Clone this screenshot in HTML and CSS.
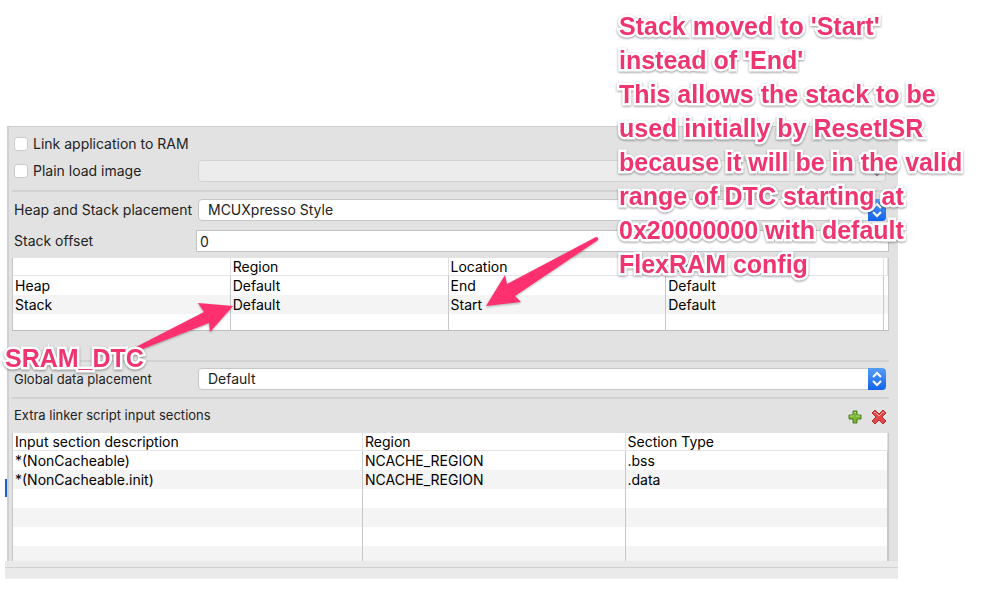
FILE: index.html
```html
<!DOCTYPE html>
<html lang="en">
<head>
    <meta charset="UTF-8">
    <meta name="viewport" content="width=device-width, initial-scale=1.0">
    <title>Managed Linker Script</title>
    <link rel="stylesheet" href="styles.css">
</head>
<body>
    <main class="figure">
        <form class="panel">
            <section class="group first">
                <div class="row check-row">
                    <label class="check"><input type="checkbox"> Link application to RAM</label>
                </div>
                <div class="row">
                    <label class="check"><input type="checkbox"> Plain load image</label>
                    <div class="combo disabled">
                        <select aria-label="Plain load image type" disabled><option></option></select>
                        <span class="combo-btn">
                            <svg width="10" height="16" viewBox="0 0 10 16"><path d="M1 8l4 4 4-4"/></svg>
                        </span>
                    </div>
                </div>
            </section>

            <section class="group placement">
                <div class="row">
                    <label for="style">Heap and Stack placement</label>
                    <div class="combo">
                        <select id="style"><option>MCUXpresso Style</option></select>
                        <span class="combo-btn">
                            <svg width="10" height="16" viewBox="0 0 10 16"><path d="M1 6l4-4 4 4M1 10l4 4 4-4"/></svg>
                        </span>
                    </div>
                </div>
                <div class="row offset-row">
                    <label for="offset">Stack offset</label>
                    <input type="text" class="offset" id="offset" value="0">
                </div>
                <div class="table-box heap-box">
                    <table class="heap-table">
                        <thead>
                            <tr><th></th><th>Region</th><th>Location</th><th>Size</th><th></th></tr>
                        </thead>
                        <tbody>
                            <tr><td>Heap</td><td>Default</td><td>End</td><td>Default</td><td></td></tr>
                            <tr><td>Stack</td><td>Default</td><td>Start</td><td>Default</td><td></td></tr>
                            <tr><td></td><td></td><td></td><td></td><td></td></tr>
                        </tbody>
                    </table>
                </div>
            </section>

            <section class="group global">
                <div class="row small">
                    <label for="global">Global data placement</label>
                    <div class="combo">
                        <select id="global"><option>Default</option></select>
                        <span class="combo-btn">
                            <svg width="10" height="16" viewBox="0 0 10 16"><path d="M1 6l4-4 4 4M1 10l4 4 4-4"/></svg>
                        </span>
                    </div>
                </div>
            </section>

            <section class="group extra">
                <div class="toolbar small">
                    <span>Extra linker script input sections</span>
                    <button type="button" class="tool" aria-label="Add">
                        <svg width="14" height="14" viewBox="0 0 14 14">
                            <path d="M5 1h4v4h4v4H9v4H5V9H1V5h4z" fill="#7db72f" stroke="#4b7a22"/>
                            <path d="M6 2.500h2M2 6h4M8 6h4" stroke="#b9dc7c" fill="none"/>
                        </svg>
                    </button>
                    <button type="button" class="tool" aria-label="Delete">
                        <svg width="16" height="16" viewBox="0 0 16 16">
                            <path d="M4 1L8 5l4-4 3 3-4 4 4 4-3 3-4-4-4 4-3-3 4-4-4-4z" fill="#e2484a" stroke="#b92b31" stroke-linejoin="round"/>
                            <path d="M3 4l1-1 4 4 4-4 1 1" stroke="#f29a98" fill="none"/>
                        </svg>
                    </button>
                </div>
                <div class="table-box sections-box">
                    <table class="sections-table">
                        <thead>
                            <tr><th>Input section description</th><th>Region</th><th>Section Type</th></tr>
                        </thead>
                        <tbody>
                            <tr><td>*(NonCacheable)</td><td>NCACHE_REGION</td><td>.bss</td></tr>
                            <tr><td>*(NonCacheable.init)</td><td>NCACHE_REGION</td><td>.data</td></tr>
                            <tr><td></td><td></td><td></td></tr>
                            <tr><td></td><td></td><td></td></tr>
                            <tr><td></td><td></td><td></td></tr>
                            <tr><td></td><td></td><td></td></tr>
                        </tbody>
                    </table>
                </div>
            </section>
        </form>
        <div class="footer"></div>
        <span class="selection-edge"></span>

        <!-- callouts drawn over the dialog -->
        <svg class="arrows" width="640" height="380" viewBox="0 0 640 380">
            <path d="M132 349L204 312 198 303 233 306 210 332 209 323 140 350z"/>
            <path d="M596 237L507 284 505 275 486 306 521 302 515 296 598 240q1-3-2-3z"/>
        </svg>
        <p class="note note-region">SRAM_DTC</p>
        <p class="note note-stack">
            Stack moved to 'Start'<br>
            instead of 'End'<br>
            This allows the stack to be<br>
            used initially by ResetISR<br>
            because it will be in the valid<br>
            range of DTC starting at<br>
            0x20000000 with default<br>
            FlexRAM config
        </p>
    </main>
</body>
</html>
```

FILE: styles.css
```css
* {
    box-sizing: border-box;
}
body {
    margin: 0;
    background: #fff;
    color: #222;
    font-family: Inter, "Liberation Sans", sans-serif;
    font-size: 14px;
    line-height: 18px;
}
.figure {
    position: relative;
    padding: 126px 101px 0 5px;
}
.panel {
    margin-left: 2px;
    background: #e2e2e2;
    border-left: 2px solid #d0d0d0;
    border-top: 1px solid #cfcfcf;
}
.group {
    margin: 0 9px 0 3px;
    padding-top: 7px;
    border-top: 2px solid #d2d2d2;
}
.group.first {
    border-top: none;
    padding: 6px 0 8px;
}
.row {
    display: grid;
    grid-template-columns: 186px 1fr;
    align-items: center;
    min-height: 22px;
    padding-right: 3px;
}
.row label {
    padding-left: 2px;
    white-space: nowrap;
}
.check-row {
    margin-bottom: 5px;
}
.check {
    display: flex;
    align-items: center;
    gap: 5px;
}
.check input {
    appearance: none;
    width: 14px;
    height: 14px;
    margin: 0;
    background: #fff;
    border: 1px solid #cbcbcb;
    border-radius: 3px;
}
.combo {
    position: relative;
    height: 22px;
}
.combo select {
    appearance: none;
    display: block;
    width: 100%;
    height: 22px;
    padding: 0 28px 0 9px;
    background: #fff;
    border: 1px solid #c6c6c6;
    border-radius: 4px;
    color: #222;
    font: inherit;
    font-size: 14px;
}
.combo.disabled select {
    background: #f1f1f1;
    border-color: #cdcdcd;
}
.combo-btn {
    position: absolute;
    top: 0;
    right: 0;
    display: grid;
    place-items: center;
    width: 18px;
    height: 22px;
    background: linear-gradient(#559df8, #1263ea);
    border-radius: 0 4px 4px 0;
    pointer-events: none;
}
.combo-btn path {
    fill: none;
    stroke: #fff;
    stroke-width: 2;
}
.disabled .combo-btn {
    background: none;
}
.disabled .combo-btn path {
    stroke: #888;
}
.offset-row {
    grid-template-columns: 184px 1fr;
    margin-top: 9px;
    padding-right: 0;
}
.offset {
    width: 100%;
    height: 22px;
    padding: 0 3px;
    background: #fff;
    border: 1px solid #c2c2c2;
    color: #222;
    font: inherit;
}
.table-box {
    background: #fff;
    border-left: 1px solid #c6c6c6;
    border-right: 1px solid #c6c6c6;
    color: #000;
}
.heap-box {
    margin: 6px 0 29px;
    border-bottom: 1px solid #bdbdbd;
}
table {
    width: 100%;
    table-layout: fixed;
    border-collapse: separate;
    border-spacing: 0;
}
th, td {
    height: 19px;
    padding: 0 2px;
    border-right: 1px solid #c8c8c8;
    font-weight: normal;
    text-align: left;
    line-height: 18px;
    white-space: nowrap;
}
th {
    height: 18px;
    border-right-color: #e0e0e0;
    border-bottom: 1px solid #e4e4e4;
    line-height: 17px;
}
tbody tr:nth-child(even) {
    background: #f4f4f4;
}
.heap-table th:last-child {
    width: 4px;
    padding: 0;
}
.heap-table td:last-child {
    padding: 0;
    border-right: none;
}
.heap-table tbody tr:last-child td {
    height: 16px;
}
.sections-table th:first-child {
    width: 40%;
}
.sections-table tbody tr:last-child td {
    height: 15px;
}
.small {
    font-size: 13px;
}
.global {
    padding: 6px 0 7px;
}
.extra {
    padding-top: 0;
}
.toolbar {
    display: flex;
    align-items: flex-start;
    gap: 8px;
    height: 34px;
    padding: 7px 2px 0;
}
.toolbar span {
    margin-right: auto;
}
.tool {
    display: grid;
    place-items: center;
    width: 16px;
    height: 16px;
    margin-top: 3px;
    padding: 0;
    background: none;
    border: none;
}
.footer {
    height: 18px;
    background: #eaeaea;
    border-bottom: 1px solid #efefef;
}
.footer::before {
    content: "";
    display: block;
    height: 6px;
    border-bottom: 1px solid #d0d0d0;
}
.selection-edge {
    position: absolute;
    left: 5px;
    top: 479px;
    width: 2px;
    height: 18px;
    background: #1b62d0;
}
.arrows {
    position: absolute;
    left: 0;
    top: 0;
    fill: #ff3070;
    filter: drop-shadow(0 1px 1px rgba(0, 0, 0, 0.3));
    pointer-events: none;
}
.note {
    position: absolute;
    margin: 0;
    color: #ee356f;
    font-family: "Liberation Sans", Arial, sans-serif;
    font-size: 25px;
    font-weight: bold;
    line-height: 34px;
    white-space: nowrap;
    -webkit-text-stroke: 5px #fff;
    paint-order: stroke fill;
    filter: drop-shadow(0 1px 1px rgba(0, 0, 0, 0.4));
    pointer-events: none;
}
.note-region {
    left: 5px;
    top: 341px;
}
.note-stack {
    left: 619px;
    top: 9px;
}
```
